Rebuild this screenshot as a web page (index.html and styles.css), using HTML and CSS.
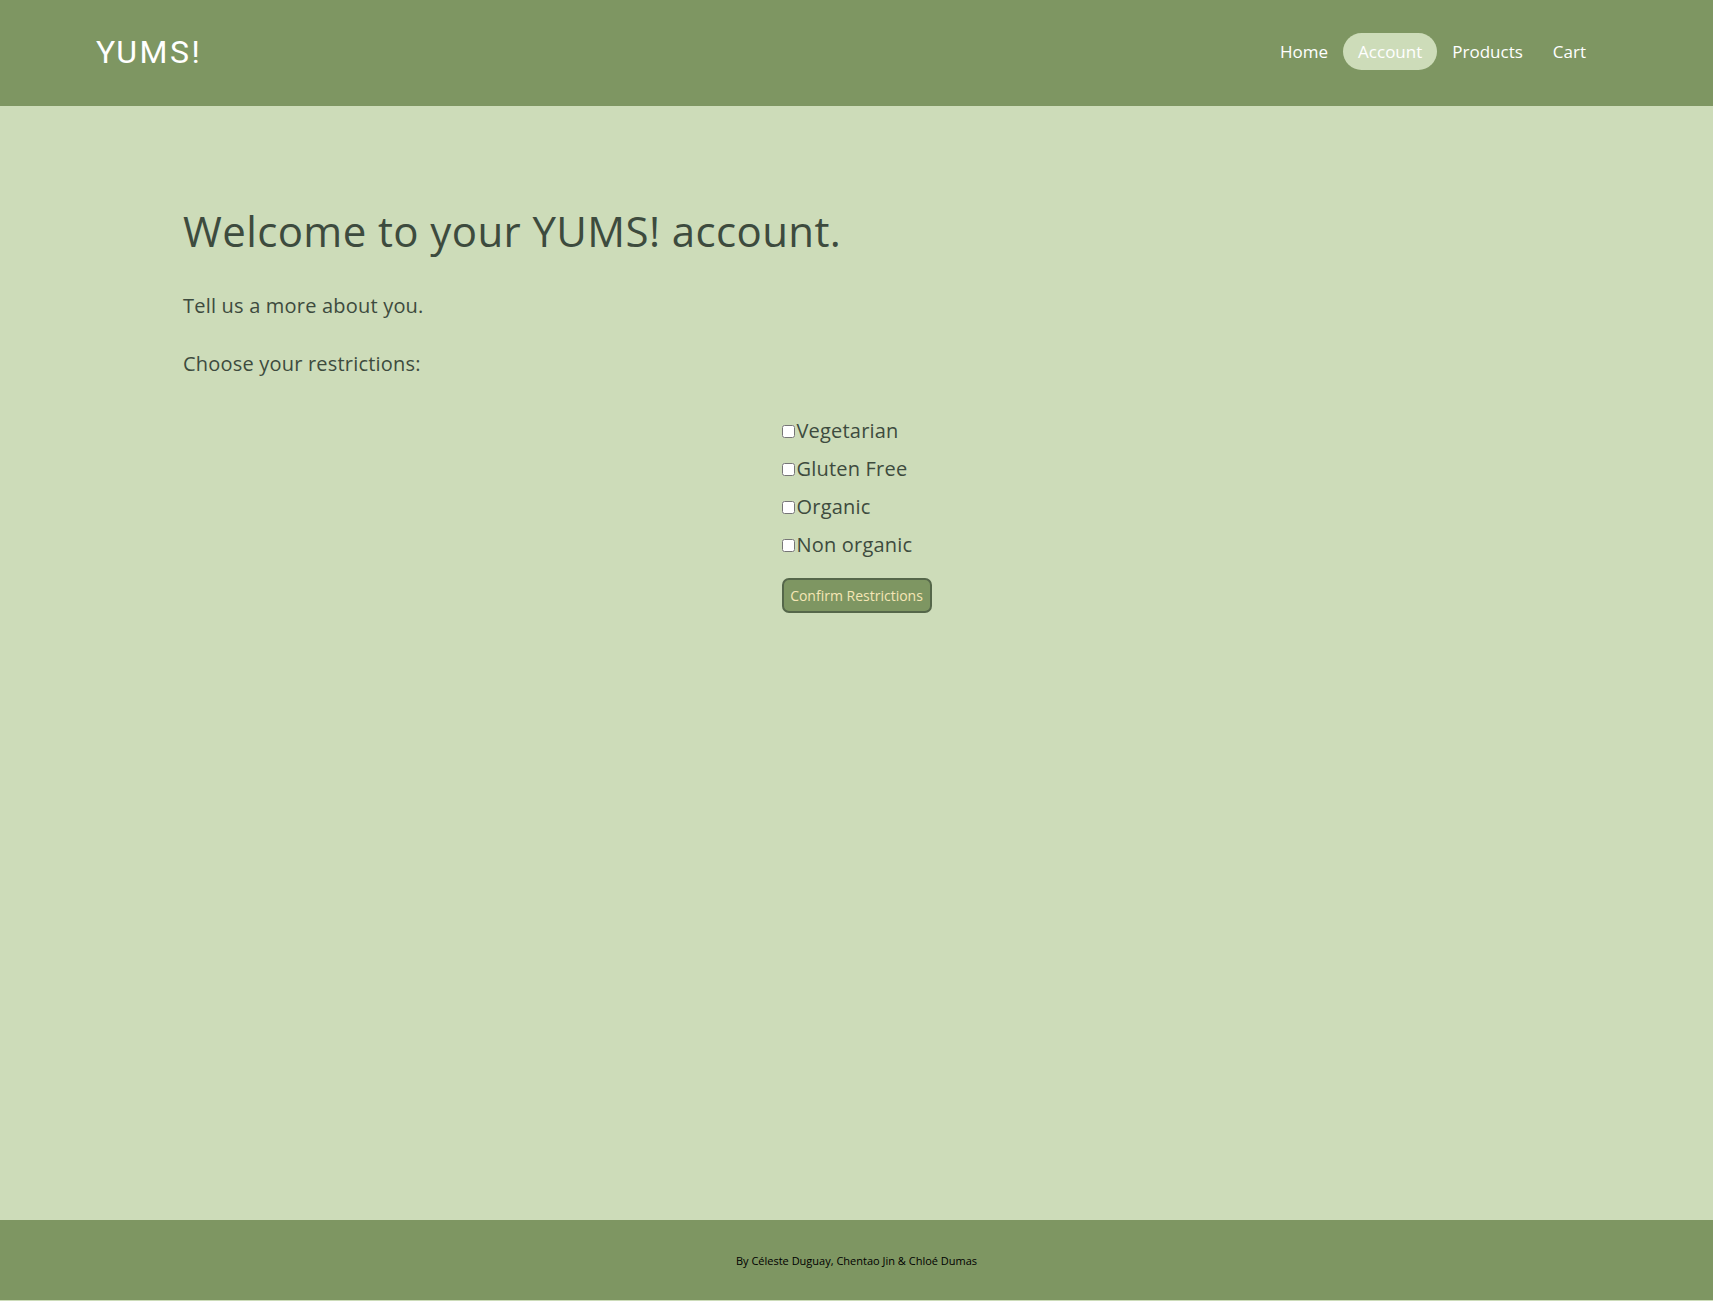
FILE: index.html
```html
<!DOCTYPE html>
<html lang="en">
<head>
<meta charset="utf-8">
<title>YUMS! Account</title>
<link rel="stylesheet" href="styles.css">
</head>
<body>
<header class="site-header">
  <div class="logo">YUMS!</div>
  <nav class="nav">
    <a class="nav-link" href="#">Home</a>
    <a class="nav-link active" href="#">Account</a>
    <a class="nav-link" href="#">Products</a>
    <a class="nav-link" href="#">Cart</a>
  </nav>
</header>
<main class="main">
  <section class="intro">
    <h1 class="title">Welcome to your YUMS! account.</h1>
    <p class="lead">Tell us a more about you.</p>
    <p class="lead">Choose your restrictions:</p>
  </section>
  <form class="restrictions">
    <div class="options">
      <label class="option"><input type="checkbox" class="check">Vegetarian</label>
      <label class="option"><input type="checkbox" class="check">Gluten Free</label>
      <label class="option"><input type="checkbox" class="check">Organic</label>
      <label class="option"><input type="checkbox" class="check">Non organic</label>
      <button type="button" class="confirm">Confirm Restrictions</button>
    </div>
  </form>
</main>
<footer class="site-footer">
  <p class="credits">By Céleste Duguay, Chentao Jin &amp; Chloé Dumas</p>
</footer>
</body>
</html>
```
FILE: styles.css
```css
* { box-sizing: border-box; }

html, body {
  margin: 0;
  padding: 0;
}

body {
  background: #cddcb9;
  font-family: "Open Sans", "DejaVu Sans", sans-serif;
  color: #3d4b3e;
}

.site-header {
  height: 106px;
  background: #7e9662;
  display: flex;
  align-items: center;
  justify-content: space-between;
  padding: 0 112px 3px 96px;
}

.logo {
  font-family: Roboto, "Open Sans", sans-serif;
  font-size: 32px;
  letter-spacing: 2.5px;
  color: #ffffff;
  line-height: 1;
}

.nav {
  display: flex;
  align-items: center;
}

.nav-link {
  color: #ffffff;
  text-decoration: none;
  font-size: 17px;
  line-height: 21px;
  padding: 8px 15px;
  border-radius: 20px;
}

.nav-link.active {
  background: #cddcb9;
}

.main {
  min-height: 1114px;
  padding: 0 0 40px;
}

.intro {
  padding: 100px 0 0 183px;
}

.title {
  margin: 0 0 36px;
  font-size: 42px;
  font-weight: 400;
  line-height: 1.2;
  letter-spacing: 0.4px;
  color: #3d4b3e;
}

.lead {
  margin: 0 0 30px;
  font-size: 20px;
  line-height: 28px;
  letter-spacing: 0.2px;
}

.restrictions {
  display: flex;
  justify-content: center;
  margin-top: 39px;
}

.options {
  display: flex;
  flex-direction: column;
  align-items: flex-start;
  gap: 10px;
}

.option {
  display: flex;
  align-items: center;
  font-size: 20px;
  line-height: 28px;
  letter-spacing: 0.2px;
  color: #3d4b3e;
}

.check {
  width: 13px;
  height: 13px;
  margin: 0 2px 0 0;
}

.confirm {
  margin-top: 9px;
  width: 150px;
  height: 35px;
  background: #7e9662;
  border: 2px solid #55674a;
  border-radius: 7px;
  color: #f5e6b5;
  font-family: "Open Sans", sans-serif;
  font-size: 14px;
  font-weight: 500;
  padding: 0;
}

.site-footer {
  background: #7e9662;
  height: 80px;
  display: flex;
  align-items: center;
  justify-content: center;
}

.credits {
  margin: 0;
  font-size: 11px;
  color: #000000;
}
```
